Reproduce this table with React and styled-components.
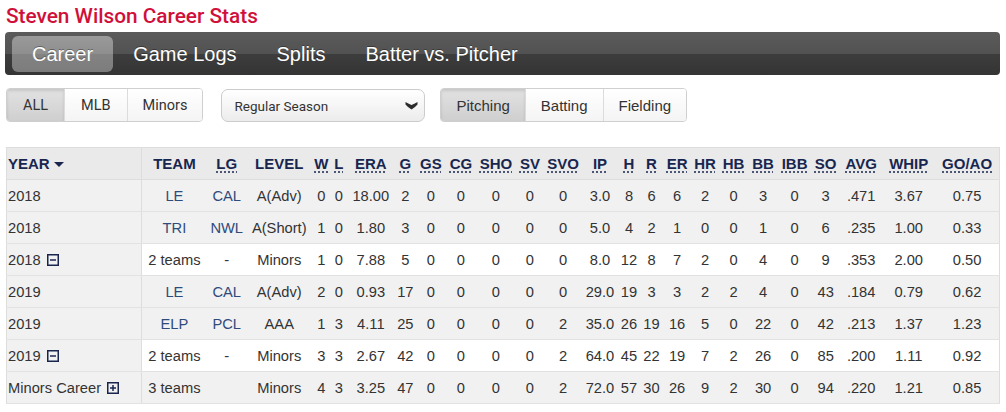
import React from 'react';
import styled, { createGlobalStyle, css } from 'styled-components';

const Global = createGlobalStyle`
  body { margin: 0; background: #fff; font-family: "Liberation Sans", Arial, sans-serif; }
  * { box-sizing: border-box; }
`;

const Page = styled.div`
  padding: 0 6px 0 5px;
`;

const Title = styled.h1`
  margin: 0;
  height: 32px;
  padding: 2px 0 0 1px;
  font: 500 20.8px/28px Roboto, "Liberation Sans", sans-serif;
  color: #d0103a;
`;

const NavBar = styled.nav`
  display: flex;
  height: 43px;
  padding: 4px 7px 3px;
  border-radius: 4px;
  background: linear-gradient(#5b5b5b 0%, #525252 50%, #3d3d3d 51%, #343434 100%);
`;

const NavItem = styled.a`
  display: flex;
  align-items: center;
  height: 36px;
  padding: 0 20px;
  border-radius: 6px;
  color: #fff;
  font: 20px "Liberation Sans", Arial, sans-serif;
  text-shadow: 0 -1px 0 rgba(0, 0, 0, 0.35);
  ${p => p.$active && css`
    background: linear-gradient(#9a9a9a 0%, #8e8e8e 50%, #838383 51%, #7c7c7c 100%);
  `}
`;

const FilterRow = styled.div`
  display: flex;
  align-items: flex-start;
  margin-top: 13px;
  padding-left: 1px;
`;

const ButtonGroup = styled.div`
  display: inline-flex;
  height: 34px;
  border: 1px solid #cfcfcf;
  border-radius: 4px;
  overflow: hidden;
  margin-left: ${p => p.$gap || 0}px;
`;

const FilterButton = styled.button`
  border: none;
  border-left: ${p => (p.$first ? 'none' : '1px solid #dcdcdc')};
  padding: 0 ${p => p.$pad || 15}px;
  height: 100%;
  color: #333;
  font: ${p => p.$font === 'din' ? '14.5px Roboto, sans-serif' : '15px "Liberation Sans", Arial, sans-serif'};
  background: linear-gradient(#ffffff, #f4f4f4);
  ${p => p.$active && css`
    background: linear-gradient(#e2e2e2, #cfcfcf);
    box-shadow: inset 0 2px 3px rgba(0, 0, 0, 0.12);
  `}
`;

const Select = styled.div`
  display: flex;
  align-items: center;
  justify-content: space-between;
  width: 204px;
  height: 33px;
  margin: 1px 0 0 18px;
  padding: 0 6px 0 12px;
  border: 1px solid #cccccc;
  border-radius: 7px;
  background: linear-gradient(#ffffff, #ececec);
  color: #333;
  font: 13.5px Roboto, sans-serif;
`;

const TableWrap = styled.div`
  margin-top: 25px;
  padding-left: 1px;
`;

const Table = styled.table`
  width: 994px;
  border-collapse: collapse;
  table-layout: fixed;
  border: 1px solid #dddddd;
  border-bottom: none;
  color: #333;
  font: 14.7px "Liberation Sans", Arial, sans-serif;
`;

const HeadCell = styled.th`
  height: 32px;
  padding: 0;
  text-align: ${p => (p.$left ? 'left' : 'center')};
  padding-left: ${p => (p.$left ? 1 : 0)}px;
  font: bold 15px "Liberation Sans", Arial, sans-serif;
  color: #18264f;
  background: #eaeaea;
  border-bottom: 1px solid #dddddd;
  border-right: ${p => (p.$divider ? '1px solid #dddddd' : 'none')};
  white-space: nowrap;
`;

const Abbr = styled.abbr`
  text-decoration: underline dotted #18264f;
  text-underline-offset: 3px;
  cursor: help;
`;

const Row = styled.tr`
  background: ${p => (p.$shade ? '#f1f1f1' : '#ffffff')};
`;

const Cell = styled.td`
  height: 32px;
  padding: 0;
  text-align: center;
  border-bottom: 1px solid #e2e2e2;
  white-space: nowrap;
`;

const YearCell = styled(Cell)`
  text-align: left;
  padding-left: 1px;
  background: #f1f1f1;
  border-right: 1px solid #dddddd;
`;

const TeamLink = styled.a`
  color: #2f4b7c;
`;

const SortArrow = styled.span`
  display: inline-block;
  width: 0;
  height: 0;
  margin: 0 0 2px 4px;
  border-left: 5px solid transparent;
  border-right: 5px solid transparent;
  border-top: 5px solid #18264f;
  vertical-align: middle;
`;

const ToggleBox = ({ plus }) => (
  <svg width="12" height="12" viewBox="0 0 12 12" style={{ marginLeft: 6, verticalAlign: -1 }}>
    <rect x="0.75" y="0.75" width="10.5" height="10.5" fill="none" stroke="#18264f" strokeWidth="1.5" />
    <line x1="3" y1="6" x2="9" y2="6" stroke="#18264f" strokeWidth="1.5" />
    {plus && <line x1="6" y1="3" x2="6" y2="9" stroke="#18264f" strokeWidth="1.5" />}
  </svg>
);

const Chevron = () => (
  <svg width="13" height="9" viewBox="0 0 13 9">
    <path d="M0.5 1 Q3 2.5 6.5 4 Q10 2.5 12.5 1 L12.5 3.5 Q10 6.5 6.5 8.5 Q3 6.5 0.5 3.5 Z" fill="#2b2b2b" />
  </svg>
);

const widths = [135, 65, 40, 65, 19, 16, 48, 21, 30, 30, 40, 28, 38, 36, 22, 23, 28, 28, 29, 30, 33, 29, 42, 53, 64];

const statHeads = ['W', 'L', 'ERA', 'G', 'GS', 'CG', 'SHO', 'SV', 'SVO', 'IP', 'H', 'R', 'ER', 'HR', 'HB', 'BB', 'IBB', 'SO', 'AVG', 'WHIP', 'GO/AO'];

const rows = [
  { year: '2018', team: 'LE', lg: 'CAL', level: 'A(Adv)', shade: true, link: true, s: ['0', '0', '18.00', '2', '0', '0', '0', '0', '0', '3.0', '8', '6', '6', '2', '0', '3', '0', '3', '.471', '3.67', '0.75'] },
  { year: '2018', team: 'TRI', lg: 'NWL', level: 'A(Short)', shade: true, link: true, s: ['1', '0', '1.80', '3', '0', '0', '0', '0', '0', '5.0', '4', '2', '1', '0', '0', '1', '0', '6', '.235', '1.00', '0.33'] },
  { year: '2018', toggle: 'minus', team: '2 teams', lg: '-', level: 'Minors', shade: false, s: ['1', '0', '7.88', '5', '0', '0', '0', '0', '0', '8.0', '12', '8', '7', '2', '0', '4', '0', '9', '.353', '2.00', '0.50'] },
  { year: '2019', team: 'LE', lg: 'CAL', level: 'A(Adv)', shade: true, link: true, s: ['2', '0', '0.93', '17', '0', '0', '0', '0', '0', '29.0', '19', '3', '3', '2', '2', '4', '0', '43', '.184', '0.79', '0.62'] },
  { year: '2019', team: 'ELP', lg: 'PCL', level: 'AAA', shade: true, link: true, s: ['1', '3', '4.11', '25', '0', '0', '0', '0', '2', '35.0', '26', '19', '16', '5', '0', '22', '0', '42', '.213', '1.37', '1.23'] },
  { year: '2019', toggle: 'minus', team: '2 teams', lg: '-', level: 'Minors', shade: false, s: ['3', '3', '2.67', '42', '0', '0', '0', '0', '2', '64.0', '45', '22', '19', '7', '2', '26', '0', '85', '.200', '1.11', '0.92'] },
  { year: 'Minors Career', toggle: 'plus', team: '3 teams', lg: '', level: 'Minors', shade: true, s: ['4', '3', '3.25', '47', '0', '0', '0', '0', '2', '72.0', '57', '30', '26', '9', '2', '30', '0', '94', '.220', '1.21', '0.85'] },
];

export default function App() {
  return (
    <Page>
      <Global />
      <Title>Steven Wilson Career Stats</Title>
      <NavBar>
        <NavItem $active>Career</NavItem>
        <NavItem>Game Logs</NavItem>
        <NavItem>Splits</NavItem>
        <NavItem>Batter vs. Pitcher</NavItem>
      </NavBar>
      <FilterRow>
        <ButtonGroup>
          <FilterButton $first $active $font="din" $pad={16}>ALL</FilterButton>
          <FilterButton $font="din" $pad={16}>MLB</FilterButton>
          <FilterButton $font="din" $pad={15}>Minors</FilterButton>
        </ButtonGroup>
        <Select>
          <span>Regular Season</span>
          <Chevron />
        </Select>
        <ButtonGroup $gap={15}>
          <FilterButton $first $active $pad={15}>Pitching</FilterButton>
          <FilterButton $pad={15}>Batting</FilterButton>
          <FilterButton $pad={15}>Fielding</FilterButton>
        </ButtonGroup>
      </FilterRow>
      <TableWrap>
        <Table>
          <colgroup>
            {widths.map((w, i) => <col key={i} style={{ width: w }} />)}
          </colgroup>
          <thead>
            <tr>
              <HeadCell $left $divider>YEAR<SortArrow /></HeadCell>
              <HeadCell>TEAM</HeadCell>
              <HeadCell><Abbr>LG</Abbr></HeadCell>
              <HeadCell>LEVEL</HeadCell>
              {statHeads.map(h => (
                <HeadCell key={h}><Abbr>{h}</Abbr></HeadCell>
              ))}
            </tr>
          </thead>
          <tbody>
            {rows.map((r, i) => (
              <Row key={i} $shade={r.shade}>
                <YearCell>
                  {r.year}
                  {r.toggle && <ToggleBox plus={r.toggle === 'plus'} />}
                </YearCell>
                <Cell>{r.link ? <TeamLink>{r.team}</TeamLink> : r.team}</Cell>
                <Cell>{r.link ? <TeamLink>{r.lg}</TeamLink> : r.lg}</Cell>
                <Cell>{r.level}</Cell>
                {r.s.map((v, j) => <Cell key={j}>{v}</Cell>)}
              </Row>
            ))}
          </tbody>
        </Table>
      </TableWrap>
    </Page>
  );
}
